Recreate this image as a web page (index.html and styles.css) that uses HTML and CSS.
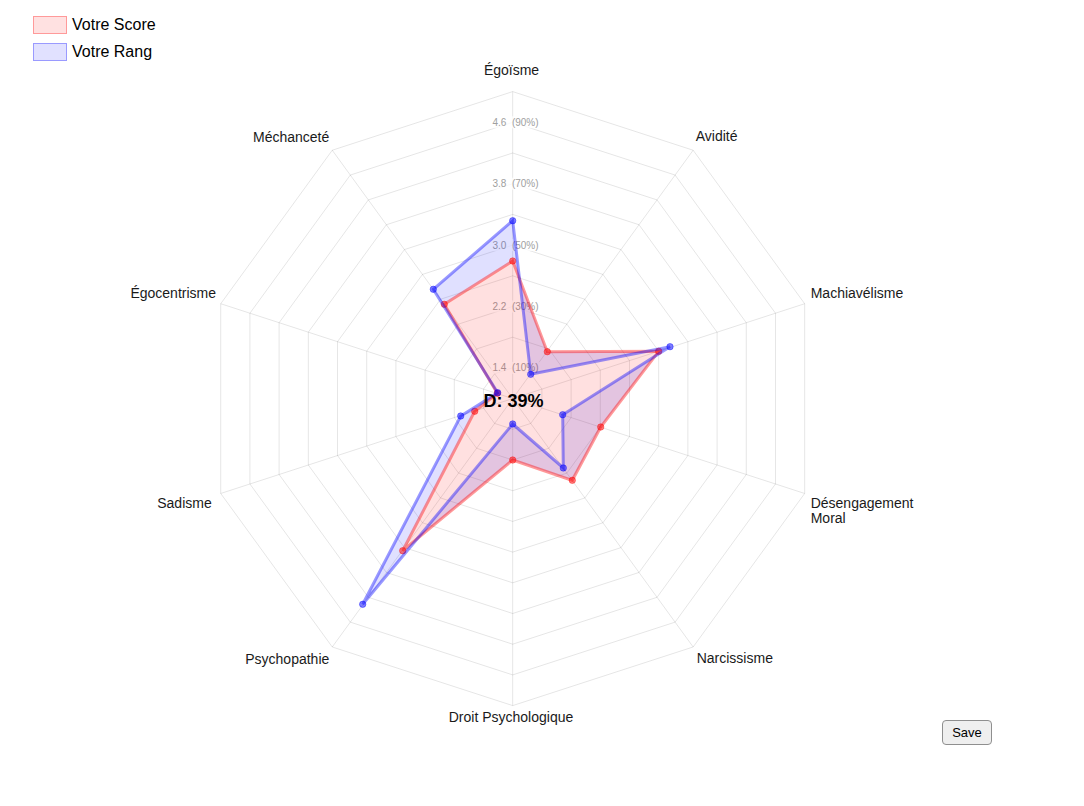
FILE: index.html
```html
<!DOCTYPE html>
<html lang="fr">
<head>
<meta charset="utf-8">
<title>Radar</title>
<link rel="stylesheet" href="styles.css">
</head>
<body>
<div class="legend">
  <div class="legend-item"><span class="swatch swatch-score"></span><span class="legend-text">Votre Score</span></div>
  <div class="legend-item"><span class="swatch swatch-rank"></span><span class="legend-text">Votre Rang</span></div>
</div>
<div class="chart-row">
  <svg class="chart" width="930" height="684" viewBox="0 61 930 684" xmlns="http://www.w3.org/2000/svg">
    <g class="grid">
      <polygon points="512.7,367.76 530.75,373.76 541.9,389.11 541.9,408.09 530.75,423.44 512.7,429.3 494.65,423.44 483.5,408.09 483.5,389.11 494.65,373.76"/>
      <polygon points="512.7,337.2 548.79,348.93 571.1,379.63 571.1,417.57 548.79,448.27 512.7,460 476.61,448.27 454.3,417.57 454.3,379.63 476.61,348.93"/>
      <polygon points="512.7,306.5 566.84,324.09 600.29,370.14 600.29,427.06 566.84,473.11 512.7,490.7 458.57,473.11 425.11,427.06 425.11,370.14 458.57,324.09"/>
      <polygon points="512.7,275.8 584.88,299.25 629.49,360.65 629.49,436.55 584.88,497.95 512.7,521.4 440.52,497.95 395.91,436.55 395.91,360.65 440.52,299.25"/>
      <polygon points="512.7,245.1 602.93,274.42 658.69,351.17 658.69,446.03 602.93,522.78 512.7,552.1 422.48,522.78 366.71,446.03 366.71,351.17 422.48,274.42"/>
      <polygon points="512.7,214.4 620.97,249.58 687.89,341.68 687.89,455.52 620.97,547.62 512.7,582.8 404.43,547.62 337.52,455.52 337.52,341.68 404.43,249.58"/>
      <polygon points="512.7,183.7 639.02,224.74 717.08,332.19 717.08,465.01 639.02,572.46 512.7,613.5 386.39,572.46 308.32,465.01 308.32,332.19 386.39,224.74"/>
      <polygon points="512.7,153 657.06,199.91 746.28,322.71 746.28,474.5 657.06,597.3 512.7,644.2 368.34,597.3 279.12,474.5 279.12,322.71 368.34,199.91"/>
      <polygon points="512.7,122.3 675.11,175.07 775.48,313.22 775.48,483.98 675.11,622.13 512.7,674.9 350.3,622.13 249.92,483.98 249.92,313.22 350.3,175.07"/>
      <polygon points="512.7,91.6 693.15,150.23 804.67,303.73 804.67,493.47 693.15,646.97 512.7,705.6 332.25,646.97 220.73,493.47 220.73,303.73 332.25,150.23"/>
      <line x1="512.7" y1="398.6" x2="512.7" y2="91.6"/>
      <line x1="512.7" y1="398.6" x2="693.15" y2="150.23"/>
      <line x1="512.7" y1="398.6" x2="804.67" y2="303.73"/>
      <line x1="512.7" y1="398.6" x2="804.67" y2="493.47"/>
      <line x1="512.7" y1="398.6" x2="693.15" y2="646.97"/>
      <line x1="512.7" y1="398.6" x2="512.7" y2="705.6"/>
      <line x1="512.7" y1="398.6" x2="332.25" y2="646.97"/>
      <line x1="512.7" y1="398.6" x2="220.73" y2="493.47"/>
      <line x1="512.7" y1="398.6" x2="220.73" y2="303.73"/>
      <line x1="512.7" y1="398.6" x2="332.25" y2="150.23"/>
    </g>
    <g class="ticks">
      <rect x="491" y="361.9" width="50" height="12"/>
      <text x="515.5" y="371.4">1.4  (10%)</text>
      <rect x="491" y="300.5" width="50" height="12"/>
      <text x="515.5" y="310">2.2  (30%)</text>
      <rect x="491" y="239.1" width="50" height="12"/>
      <text x="515.5" y="248.6">3.0  (50%)</text>
      <rect x="491" y="177.7" width="50" height="12"/>
      <text x="515.5" y="187.2">3.8  (70%)</text>
      <rect x="491" y="116.3" width="50" height="12"/>
      <text x="515.5" y="125.8">4.6  (90%)</text>
    </g>
    <g class="point-labels">
      <text x="511.5" y="75" text-anchor="middle">Égoïsme</text>
      <text x="695.7" y="141">Avidité</text>
      <text x="810.7" y="297.7">Machiavélisme</text>
      <text x="810.7" y="507.7">Désengagement</text>
      <text x="810.7" y="523.3">Moral</text>
      <text x="696.7" y="663.3">Narcissisme</text>
      <text x="511" y="722.3" text-anchor="middle">Droit Psychologique</text>
      <text x="329.3" y="664" text-anchor="end">Psychopathie</text>
      <text x="211.7" y="507.7" text-anchor="end">Sadisme</text>
      <text x="216" y="297.7" text-anchor="end">Égocentrisme</text>
      <text x="329.3" y="141.7" text-anchor="end">Méchanceté</text>
    </g>
    <g class="series series-rank">
      <path class="area" d="M512.7,220.7 L530.7,374.3 L670,346.7 L562.7,414.7 L563.3,468 L512.7,424 L362.7,604.3 L460.7,416 L497.7,392.7 L433.3,289.3 Z M512.7,261 L547.3,351.7 L658.7,351.3 L600.7,427 L572.3,480.3 L512.7,460 L402.7,550.7 L474.7,411.3 L497.3,393.3 L444.3,304.3 Z"/>
    </g>
    <g class="series series-score">
      <polygon points="512.7,261 547.3,351.7 658.7,351.3 600.7,427 572.3,480.3 512.7,460 402.7,550.7 474.7,411.3 497.3,393.3 444.3,304.3"/>
      <circle cx="512.7" cy="261" r="3.2"/>
      <circle cx="547.3" cy="351.7" r="3.2"/>
      <circle cx="658.7" cy="351.3" r="3.2"/>
      <circle cx="600.7" cy="427" r="3.2"/>
      <circle cx="572.3" cy="480.3" r="3.2"/>
      <circle cx="512.7" cy="460" r="3.2"/>
      <circle cx="402.7" cy="550.7" r="3.2"/>
      <circle cx="474.7" cy="411.3" r="3.2"/>
      <circle cx="497.3" cy="393.3" r="3.2"/>
      <circle cx="444.3" cy="304.3" r="3.2"/>
    </g>
    <g class="series series-rank">
      <polygon class="outline" points="512.7,220.7 530.7,374.3 670,346.7 562.7,414.7 563.3,468 512.7,424 362.7,604.3 460.7,416 497.7,392.7 433.3,289.3"/>
      <circle cx="512.7" cy="220.7" r="3.2"/>
      <circle cx="530.7" cy="374.3" r="3.2"/>
      <circle cx="670" cy="346.7" r="3.2"/>
      <circle cx="562.7" cy="414.7" r="3.2"/>
      <circle cx="563.3" cy="468" r="3.2"/>
      <circle cx="512.7" cy="424" r="3.2"/>
      <circle cx="362.7" cy="604.3" r="3.2"/>
      <circle cx="460.7" cy="416" r="3.2"/>
      <circle cx="497.7" cy="392.7" r="3.2"/>
      <circle cx="433.3" cy="289.3" r="3.2"/>
    </g>
    <text class="center-label" x="513.5" y="407.3" text-anchor="middle">D: 39%</text>
  </svg>
  <button class="save-btn" type="button">Save</button>
</div>
</body>
</html>
```

FILE: styles.css
```css
html, body {
  margin: 0;
  padding: 0;
  background: #ffffff;
}

body {
  width: 1084px;
  font-family: "Liberation Sans", Arial, sans-serif;
  color: #000;
}

.legend {
  display: flex;
  flex-direction: column;
  gap: 9px;
  padding: 16px 0 0 33px;
}

.legend-item {
  display: flex;
  align-items: center;
  gap: 5px;
  height: 18px;
}

.swatch {
  box-sizing: border-box;
  width: 34px;
  height: 18px;
  border: 1px solid;
}

.swatch-score {
  background: #ffe1e1;
  border-color: #ff9a9a;
}

.swatch-rank {
  background: #e1e1ff;
  border-color: #9a9aff;
}

.legend-text {
  font-size: 16px;
  line-height: 18px;
  color: #000;
}

.chart-row {
  display: flex;
  align-items: flex-end;
}

.chart {
  display: block;
  flex: none;
}

.grid polygon,
.grid line {
  fill: none;
  stroke: rgba(0, 0, 0, 0.1);
  stroke-width: 1;
}

.ticks rect {
  fill: rgba(255, 255, 255, 0.75);
}

.ticks text {
  font-family: "Liberation Sans", Arial, sans-serif;
  font-size: 10px;
  fill: #a0a0a0;
  text-anchor: middle;
  white-space: pre;
}

.point-labels text {
  font-family: "Liberation Sans", Arial, sans-serif;
  font-size: 14px;
  fill: #1a1a1a;
}

.series polygon {
  stroke-width: 3;
  stroke-linejoin: miter;
}

.series-score polygon {
  fill: rgba(255, 0, 0, 0.12);
  stroke: rgba(255, 0, 0, 0.4);
}

.series-score circle {
  fill: rgba(255, 0, 0, 0.5);
  stroke: rgba(255, 0, 0, 0.4);
  stroke-width: 1;
}

.series-rank .area {
  fill: rgba(0, 0, 255, 0.12);
  fill-rule: evenodd;
  stroke: none;
}

.series-rank .outline {
  fill: none;
  stroke: rgba(0, 0, 255, 0.4);
}

.series-rank circle {
  fill: rgba(0, 0, 255, 0.5);
  stroke: rgba(0, 0, 255, 0.4);
  stroke-width: 1;
}

.center-label {
  font-family: "Liberation Sans", Arial, sans-serif;
  font-size: 18px;
  font-weight: bold;
  fill: #000;
}

.save-btn {
  flex: none;
  box-sizing: border-box;
  width: 50px;
  height: 25px;
  margin-left: 12px;
  padding: 0;
  font-family: "Liberation Sans", Arial, sans-serif;
  font-size: 13px;
  color: #000;
  background: #efefef;
  border: 1px solid #8f8f8f;
  border-radius: 4px;
}
```
